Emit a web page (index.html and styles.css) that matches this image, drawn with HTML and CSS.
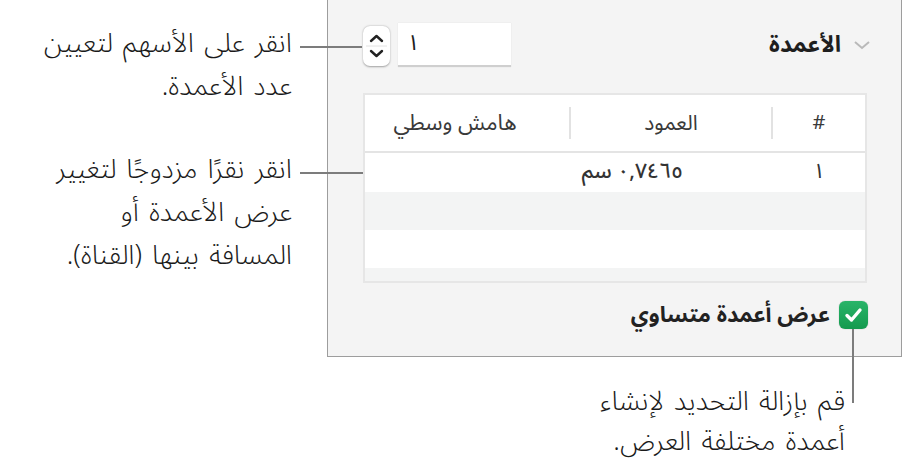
FILE: index.html
```html
<!DOCTYPE html>
<html lang="ar" dir="rtl">
<head>
<meta charset="utf-8"/>
<title>الأعمدة</title>
<link rel="stylesheet" href="styles.css">
</head>
<body>
<div class="sheet">
  <div class="panel">
    <div class="head">
      <div class="title">
        <svg class="chev" width="18" height="10" viewBox="0 0 18 10"><path d="M2 2 L9 8 L16 2" fill="none" stroke="#b9b9b9" stroke-width="2"/></svg>
        <span>الأعمدة</span>
      </div>
      <div class="count">
        <div class="numbox">١</div>
        <div class="stepper">
          <svg width="27" height="40" viewBox="0 0 27 40">
            <path d="M8 15 L13.5 10 L19 15" fill="none" stroke="#222" stroke-width="2.4" stroke-linecap="round" stroke-linejoin="round"/>
            <line x1="3" y1="20" x2="24" y2="20" stroke="#e2e2e2" stroke-width="1"/>
            <path d="M8 25 L13.5 30 L19 25" fill="none" stroke="#222" stroke-width="2.4" stroke-linecap="round" stroke-linejoin="round"/>
          </svg>
        </div>
      </div>
    </div>

    <div class="cols">
      <div class="row thead">
        <div class="cell c-num">#</div>
        <div class="cell c-col"><span>العمود</span></div>
        <div class="cell c-gap"><span>هامش وسطي</span></div>
      </div>
      <div class="row first">
        <div class="cell c-num">١</div>
        <div class="cell c-col val">٠,٧٤٦٥ سم</div>
        <div class="cell"></div>
      </div>
      <div class="row alt"></div>
      <div class="row"></div>
      <div class="row alt last"></div>
    </div>

    <label class="equal">
      <span class="check">
        <svg width="29" height="28" viewBox="0 0 29 28"><path d="M8 14.5 L12.5 19 L21 9" fill="none" stroke="#fff" stroke-width="3.4" stroke-linecap="round" stroke-linejoin="round"/></svg>
      </span>
      <span>عرض أعمدة متساوي</span>
    </label>
  </div>

  <div class="notes">
    <p class="note first">انقر على الأسهم لتعيين<br>عدد الأعمدة.</p>
    <p class="note second">انقر نقرًا مزدوجًا لتغيير<br>عرض الأعمدة أو<br>المسافة بينها (القناة).</p>
  </div>

  <p class="note bottom">قم بإزالة التحديد لإنشاء<br>أعمدة مختلفة العرض.</p>

  <span class="lead lead-arrows"></span>
  <span class="lead lead-table"></span>
  <span class="lead lead-check"></span>
</div>
</body>
</html>
```

FILE: styles.css
```css
body { margin: 0; background: #fff; font-family: "Noto Sans Arabic", "DejaVu Sans", sans-serif; color: #1d1d1d; }
.sheet { position: relative; width: 902px; height: 466px; display: grid; grid-template-columns: 575px 327px; grid-template-rows: 357px 109px; direction: rtl; overflow: hidden; }

/* panel */
.panel { grid-column: 1; grid-row: 1; margin-top: -2px; border: 1px solid #9d9d9d; background: #f4f4f4; padding: 24px 34px 0 35px; box-sizing: border-box; height: 359px; }
.head { display: flex; justify-content: space-between; align-items: center; height: 44px; }
.title { display: flex; align-items: center; gap: 12px; margin-right: -4px; font-size: 23px; font-weight: bold; color: #1e1e1e; line-height: 30px; }
.count { display: flex; align-items: center; gap: 8px; }
.numbox { width: 113px; height: 44px; background: #fff; border-bottom: 2px solid #cfcfcf; box-sizing: border-box; font-size: 22px; line-height: 40px; padding: 0 9px; text-align: left; box-shadow: 0 0 1px rgba(0,0,0,0.12); }
.stepper { width: 27px; height: 40px; background: #fff; border-radius: 7px; box-shadow: 0 0.5px 2px rgba(0,0,0,0.35); margin-top: 2px; }
.stepper svg { display: block; }

/* columns table */
.cols { width: 504px; margin-top: 26px; border: 2px solid #e6e6e6; background: #fff; box-sizing: border-box; font-size: 21px; color: #333; }
.row { display: grid; grid-template-columns: 92px 202px 1fr; height: 38px; align-items: center; line-height: 28px; }
.row.thead { height: 56px; border-bottom: 2px solid #e4e4e4; color: #3a3a3a; }
.row.first { height: 39px; }
.row.alt { background: #f3f4f4; }
.row.last { height: 13px; }
.cell { text-align: center; }
.thead .c-num { font-size: 20px; }
.thead .cell span { display: block; height: 32px; line-height: 32px; border-right: 2px solid #e2e2e2; }
.thead .c-gap span { font-size: 22px; padding-right: 24px; }
.cell.val { text-align: right; padding-right: 90px; font-weight: 500; padding-bottom: 4px; }
.first .c-num { padding-bottom: 4px; }

.equal { display: flex; align-items: center; gap: 9px; margin-top: 18px; margin-right: -1px; font-size: 22px; line-height: 28px; font-weight: bold; color: #222; }
.check { width: 29px; height: 28px; border-radius: 6px; background: linear-gradient(#29b469, #149a4e); box-shadow: 0 0 1px rgba(0,0,0,0.4); }
.check svg { display: block; }

/* callouts */
.notes { grid-column: 2; grid-row: 1; padding: 22px 0 0 0; }
.note { margin: 0; font-size: 27px; font-weight: 300; line-height: 43px; word-spacing: 3px; color: #1a1a1a; text-align: right; white-space: nowrap; }
.notes .note { margin-right: 35px; }
.note.second { margin-top: 40px; }
.note.bottom { grid-column: 1; grid-row: 2; line-height: 40px; margin: 25px 57px 0 0; }

.lead { position: absolute; background: #7c7c7c; }
.lead-arrows { left: 300px; top: 46px; width: 62px; height: 2px; }
.lead-table { left: 300px; top: 172px; width: 63px; height: 2px; }
.lead-check { left: 852px; top: 329px; width: 2px; height: 74px; }
```
